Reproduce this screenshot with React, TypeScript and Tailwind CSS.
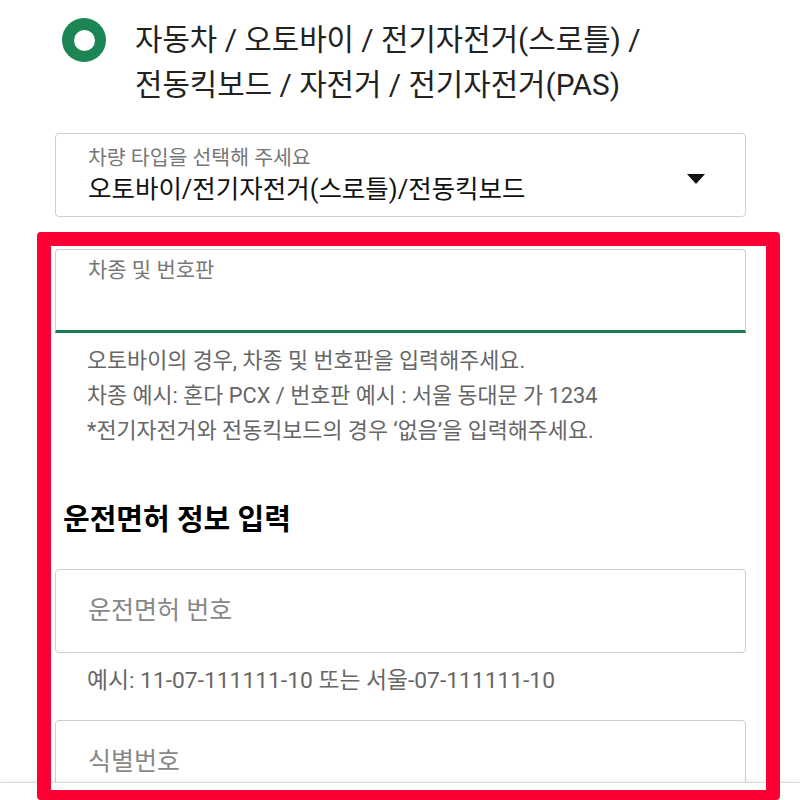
import React from 'react';

const font = { fontFamily: '"Roboto", "Noto Sans CJK KR", sans-serif' };

const HelperText: React.FC<{ lines: string[]; size?: string }> = ({ lines, size = 'text-[21.8px]' }) => (
  <div className={`pl-[32px] ${size} leading-[35px] text-[#666666]`}>
    {lines.map((line, i) => (
      <p key={i} className="whitespace-nowrap">{line}</p>
    ))}
  </div>
);

const App: React.FC = () => {
  return (
    <div className="relative h-[800px] w-[800px] overflow-hidden bg-white" style={font}>
      <div className="w-[746px] pl-[55px]">
        {/* vehicle category */}
        <div className="flex items-start pt-[17px]">
          <div className="ml-[7px] mt-[1px] flex h-[44px] w-[44px] shrink-0 items-center justify-center rounded-full bg-[#1b8553]">
            <div className="h-[21px] w-[21px] rounded-full bg-white" />
          </div>
          <div className="ml-[29px] whitespace-nowrap text-[29.8px] leading-[45px] text-[#222222]">
            <p>자동차 / 오토바이 / 전기자전거(스로틀) /</p>
            <p>전동킥보드 / 자전거 / 전기자전거(PAS)</p>
          </div>
        </div>

        {/* type select */}
        <div className="mt-[26px] flex h-[84px] items-center justify-between rounded-[4px] border border-[#cfcfcf] pl-[32px] pr-[40px]">
          <div>
            <p className="text-[20.5px] leading-[24px] text-[#777777]">차량 타입을 선택해 주세요</p>
            <p className="mt-[4px] whitespace-nowrap text-[25.5px] leading-[30px] text-[#111111]">오토바이/전기자전거(스로틀)/전동킥보드</p>
          </div>
          <div className="mt-[8px] h-0 w-0 border-x-[9px] border-t-[10px] border-x-transparent border-t-[#111111]" />
        </div>

        {/* plate input, focused */}
        <div className="mt-[32px] h-[84px] rounded-t-[4px] border-x border-t border-[#cfcfcf] border-b-[3px] border-b-[#1b7a4f] pl-[32px] pt-[8px]">
          <p className="text-[21px] leading-[24px] text-[#777777]">차종 및 번호판</p>
        </div>
        <div className="mt-[10px]">
          <HelperText
            lines={[
              '오토바이의 경우, 차종 및 번호판을 입력해주세요.',
              '차종 예시: 혼다 PCX / 번호판 예시 : 서울 동대문 가 1234',
              '*전기자전거와 전동킥보드의 경우 ‘없음’을 입력해주세요.',
            ]}
          />
        </div>

        {/* licence */}
        <h2 className="mt-[54px] pl-[8px] text-[29px] font-bold leading-[36px] text-black">운전면허 정보 입력</h2>

        <div className="mt-[31px] flex h-[84px] items-center rounded-[4px] border border-[#cfcfcf] pl-[32px]">
          <p className="text-[25px] text-[#888888]">운전면허 번호</p>
        </div>
        <div className="mt-[10px]">
          <HelperText size="text-[22.8px]" lines={['예시: 11-07-111111-10 또는 서울-07-111111-10']} />
        </div>

        <div className="mt-[22px] flex h-[84px] items-center rounded-[4px] border border-[#cfcfcf] pl-[32px]">
          <p className="text-[25px] text-[#888888]">식별번호</p>
        </div>
      </div>

      {/* bottom bar */}
      <div className="absolute bottom-0 left-0 h-[18px] w-full border-t border-[#dddddd] bg-white shadow-[0_-2px_4px_rgba(0,0,0,0.06)]" />

      {/* highlight frame */}
      <div className="pointer-events-none absolute left-[37px] top-[232px] h-[568px] w-[743px] rounded-[4px] border-[14px] border-b-[10px] border-[#fb0034]" />
    </div>
  );
};

export default App;
